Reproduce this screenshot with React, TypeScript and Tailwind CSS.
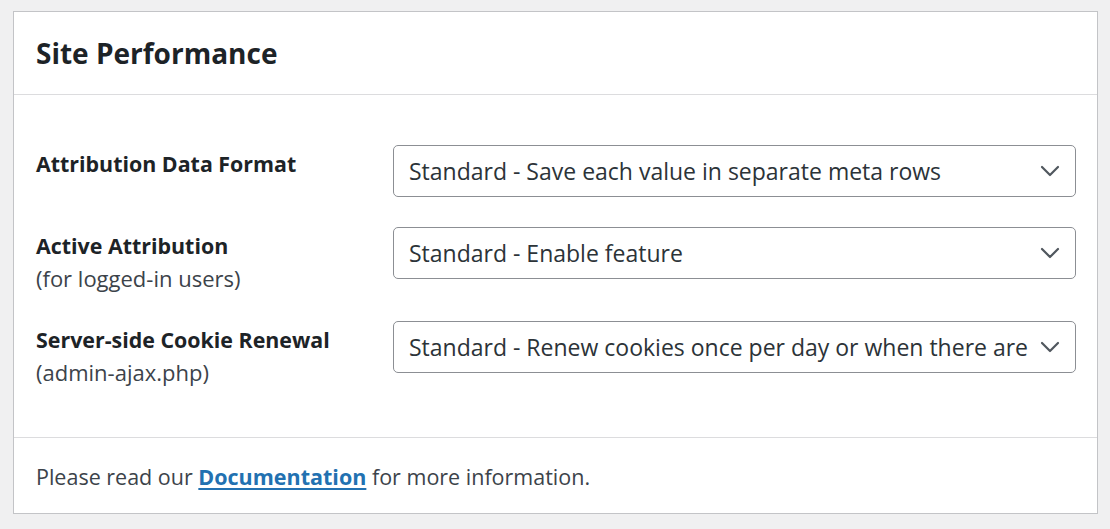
const ROWS = [
  {
    label: "Attribution Data Format",
    sub: "",
    value: "Standard - Save each value in separate meta rows",
    height: "h-[82px]",
  },
  {
    label: "Active Attribution",
    sub: "(for logged-in users)",
    value: "Standard - Enable feature",
    height: "h-[94px]",
  },
  {
    label: "Server-side Cookie Renewal",
    sub: "(admin-ajax.php)",
    value: "Standard - Renew cookies once per day or when there are changes",
    height: "h-[92px]",
  },
];

function Chevron() {
  return (
    <svg width="20" height="12" viewBox="0 0 20 12" fill="none" className="shrink-0">
      <path
        d="M2 2l8 8 8-8"
        stroke="#50575e"
        strokeWidth="2.2"
        strokeLinecap="round"
        strokeLinejoin="round"
      />
    </svg>
  );
}

function SelectBox({ value }: { value: string }) {
  return (
    <div className="relative flex h-[52px] w-[683px] shrink-0 items-center rounded-[5px] border border-[#8c8f94] bg-white pl-[15px] pr-[42px]">
      <span className="overflow-hidden whitespace-nowrap text-[23px] text-[#2c3338]">{value}</span>
      <span className="absolute right-[15px] top-[19px]">
        <Chevron />
      </span>
    </div>
  );
}

export default function App() {
  return (
    <div
      className="h-[529px] w-full bg-[#f0f0f1] px-[13px] pt-[11px]"
      style={{ fontFamily: '"Open Sans", "Noto Sans", sans-serif' }}
    >
      <div className="w-[1085px] border border-[#c3c4c7] bg-white">
        <div className="flex h-[83px] items-center border-b border-[#dcdcde] px-[22px]">
          <h2 className="text-[28px] font-bold text-[#1d2327]">Site Performance</h2>
        </div>
        <div className="h-[343px] border-b border-[#dcdcde] pl-[22px] pr-[21px] pt-[50px]">
          {ROWS.map((row) => (
            <div key={row.label} className={`flex items-start ${row.height}`}>
              <div className="w-[357px] shrink-0 pt-[2px] leading-[33px]">
                <div className="text-[21.4px] font-bold text-[#1d2327]">{row.label}</div>
                {row.sub && <div className="text-[22px] text-[#3c434a]">{row.sub}</div>}
              </div>
              <SelectBox value={row.value} />
            </div>
          ))}
        </div>
        <div className="flex h-[75px] items-center px-[22px] pt-[3px] text-[21.5px] text-[#3c434a]">
          <p>
            Please read our{" "}
            <a
              href="#"
              className="font-bold text-[#2271b1] underline decoration-2 underline-offset-[3px]"
            >
              Documentation
            </a>{" "}
            for more information.
          </p>
        </div>
      </div>
    </div>
  );
}
